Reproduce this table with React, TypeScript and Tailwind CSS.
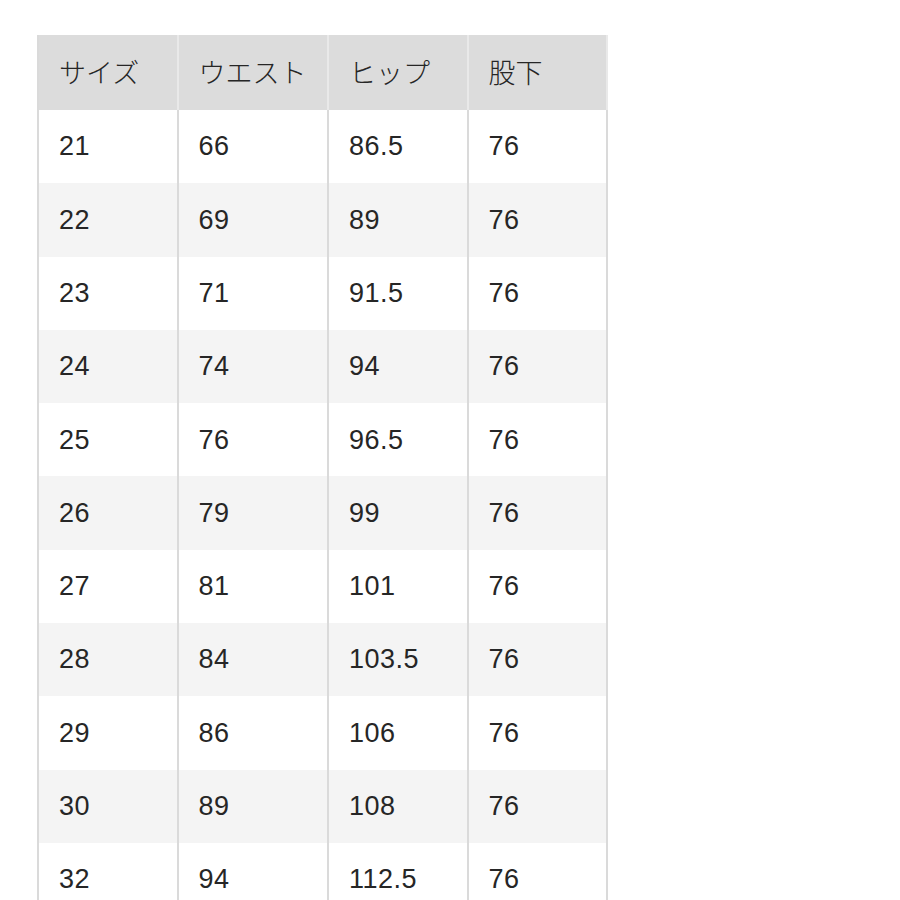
import React from "react";

const rows = [
  ["21", "66", "86.5", "76"],
  ["22", "69", "89", "76"],
  ["23", "71", "91.5", "76"],
  ["24", "74", "94", "76"],
  ["25", "76", "96.5", "76"],
  ["26", "79", "99", "76"],
  ["27", "81", "101", "76"],
  ["28", "84", "103.5", "76"],
  ["29", "86", "106", "76"],
  ["30", "89", "108", "76"],
  ["32", "94", "112.5", "76"],
];

const headers = ["サイズ", "ウエスト", "ヒップ", "股下"];
const widths = ["w-[140px]", "w-[151px]", "w-[140px]", "w-[140px]"];

export default function App() {
  return (
    <div className="min-h-[900px] bg-white pl-[37px] pt-[35px] text-[#262626]">
      <div className="w-[571px] border-l-2 border-[#dadada]">
        <div className="flex h-[75px] bg-[#dcdcdc]">
          {headers.map((h, i) => (
            <div
              key={h}
              className={`${widths[i]} flex items-center border-r-2 border-[#e9e9e9] pl-[20px] text-[27px] font-light`}
              style={{ fontFamily: '"Noto Sans CJK JP", sans-serif' }}
            >
              {h}
            </div>
          ))}
        </div>
        {rows.map((r, ri) => (
          <div
            key={ri}
            className={`flex h-[73.3px] ${ri % 2 === 0 ? "bg-white" : "bg-[#f4f4f4]"}`}
          >
            {r.map((c, ci) => (
              <div
                key={ci}
                className={`${widths[ci]} flex items-center border-r-2 border-[#dadada] pl-[20px] text-[27px] tracking-[0.5px]`}
                style={{ fontFamily: '"Liberation Sans", sans-serif' }}
              >
                {c}
              </div>
            ))}
          </div>
        ))}
      </div>
    </div>
  );
}
